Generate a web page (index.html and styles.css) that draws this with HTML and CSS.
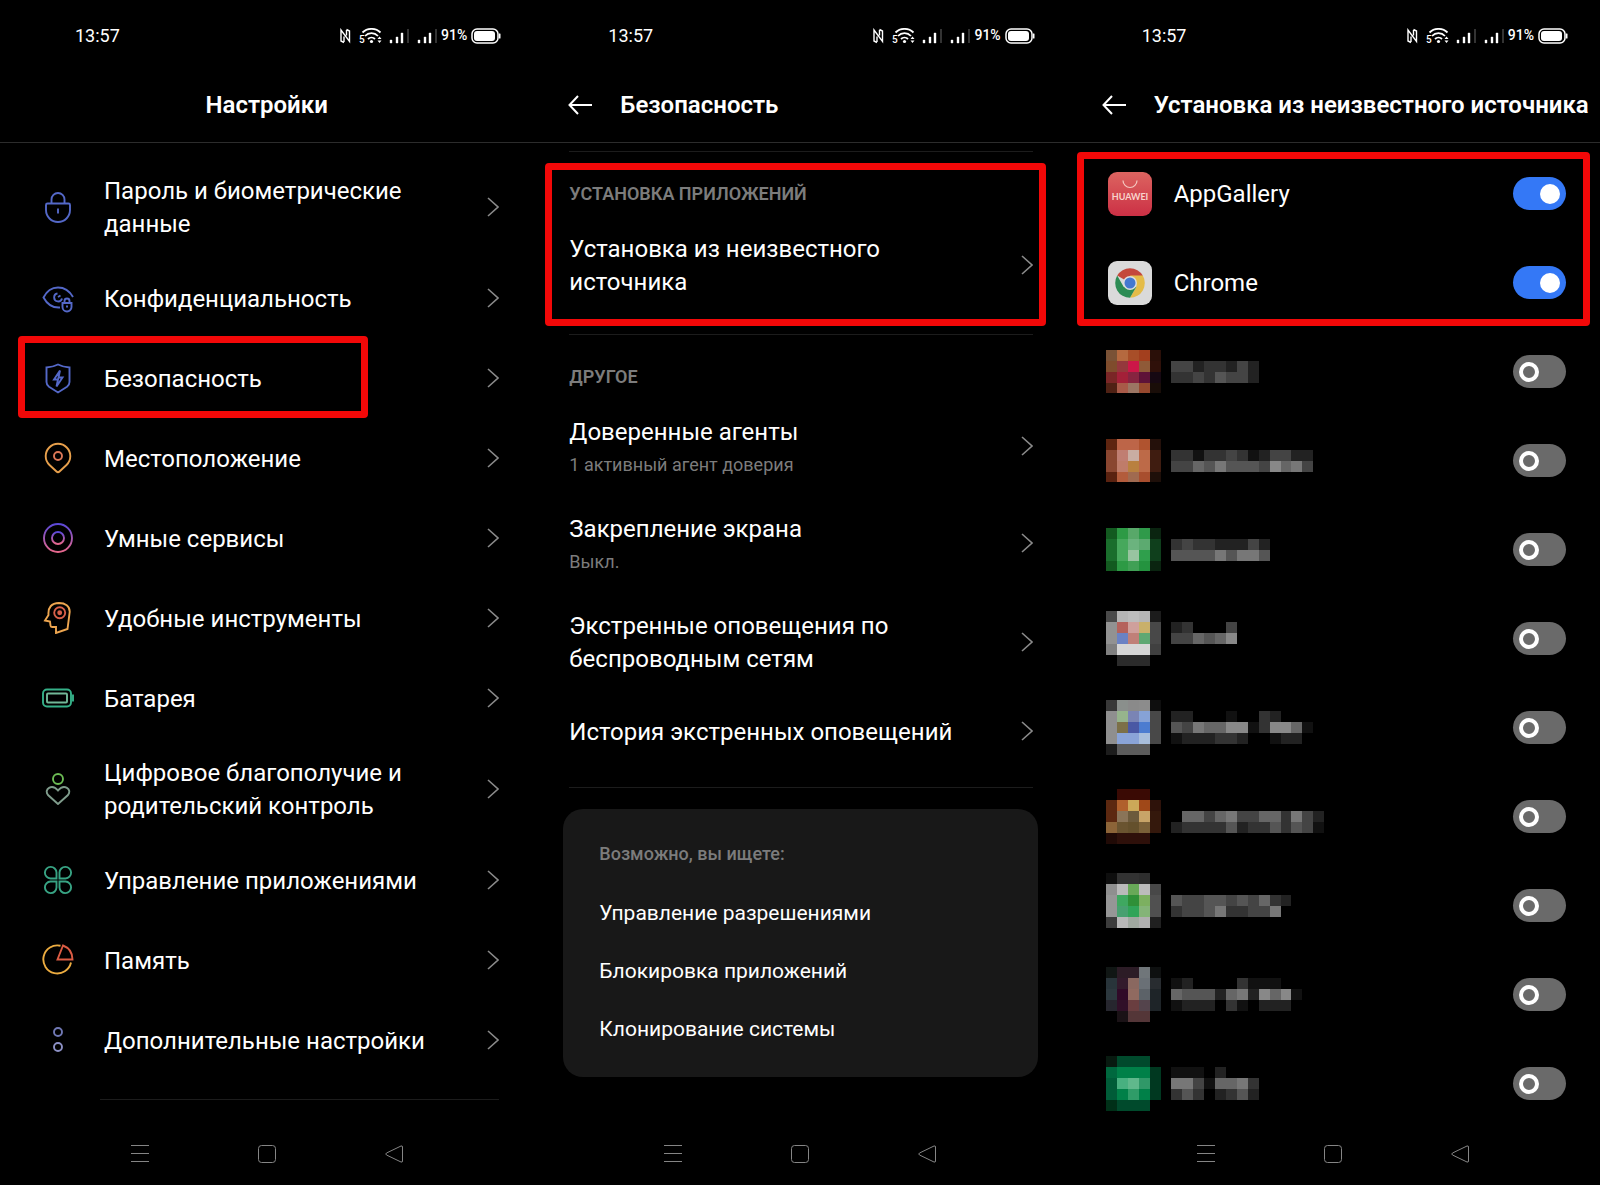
FILE: index.html
```html
<!DOCTYPE html>
<html lang="ru">
<head>
  <meta charset="UTF-8">
  <meta name="viewport" content="width=device-width, initial-scale=1.0">
  <title>Настройки</title>
  <link rel="stylesheet" href="styles.css">
</head>
<body>

  <!-- Общие иконки -->
  <svg class="sprite" width="0" height="0" aria-hidden="true">
    <defs>
      <linearGradient id="ring-grad" x1="0" y1="0" x2="0" y2="1">
        <stop offset="0" stop-color="#5a48d8"/>
        <stop offset="1" stop-color="#e8688c"/>
      </linearGradient>
      <linearGradient id="huawei-grad" x1="0" y1="0" x2="0" y2="1">
        <stop offset="0" stop-color="#dc6460"/>
        <stop offset="1" stop-color="#cc3045"/>
      </linearGradient>
    </defs>
    <symbol id="signals" viewBox="0 0 98 16">
      <path d="M5 14.500L2 13V2L10.500 13.500V3L7.500 1.500M5 8.500V14M7.500 2V7.500" fill="none" stroke="#fff" stroke-width="1.400"/>
      <g fill="none" stroke="#fff" stroke-width="1.800">
        <path d="M23.500 4.500a13 13 0 0 1 18 0M26 8a9 9 0 0 1 13 0M29 11a5 5 0 0 1 7 0"/>
      </g>
      <circle cx="32.500" cy="13.500" r="1.600" fill="#fff"/>
      <path d="M38.500 11l2-2.500 2 2.500zM38.500 12.500l2 2.500 2-2.500z" fill="#fff"/>
      <path d="M51 12h2v3h-2zM57 9h2v6h-2zM62 5h2v10h-2zM79 12h2v3h-2zM85 9h2v6h-2zM90 5h2v10h-2z" fill="#fff" stroke="#fff" stroke-width=".4"/>
      <path d="M68 1h2v14h-2zM96 1h2v14h-2z" fill="#333"/>
    </symbol>
    <symbol id="power" viewBox="0 0 30 16">
      <rect x="1" y="1" width="26" height="14" rx="5" fill="none" stroke="#fff" stroke-width="1.500"/>
      <rect x="3" y="3" width="21" height="10" rx="3" fill="#fff"/>
      <path d="M28 5.500h1q.5 0 .5.500v4q0 .5-.5.500h-1z" fill="#fff"/>
    </symbol>
    <symbol id="chevron" viewBox="0 0 12 20">
      <path d="M1 1l10 9-10 9" fill="none" stroke="#8a8a8a" stroke-width="1.600"/>
    </symbol>
    <symbol id="arrow" viewBox="0 0 24 20">
      <path d="M24 10H1.500M10 1L1.500 10l8.500 9" fill="none" stroke="#fff" stroke-width="2"/>
    </symbol>
    <symbol id="nav-menu" viewBox="0 0 18 18">
      <path d="M0 .5h18M0 8.500h18M0 16.500h18" stroke="#858585"/>
    </symbol>
    <symbol id="nav-home" viewBox="0 0 18 18">
      <rect x=".5" y=".5" width="17" height="17" rx="3" fill="none" stroke="#858585"/>
    </symbol>
    <symbol id="nav-back" viewBox="0 0 18 18">
      <path d="M16 1Q17.500.500 17.500 2v14q0 1.500-1.500 1L1.500 10Q0 9 1.500 8z" fill="none" stroke="#858585"/>
    </symbol>
  </svg>

  <main class="screens">

    <!-- Настройки -->
    <section class="screen">
      <header class="header">
        <div class="status">
          <time>13:57</time>
          <div class="status-icons">
            <svg width="98" height="16"><use href="#signals"/><text x="20" y="15">5</text></svg>
            <span>91%</span>
            <svg width="30" height="16"><use href="#power"/></svg>
          </div>
        </div>
        <div class="titlebar centered"><h1>Настройки</h1></div>
      </header>

      <nav class="content settings">
        <a class="row" href="#password">
          <svg class="icon blue" viewBox="0 0 32 32"><path d="M5.500 12.500h21q1.500 0 1.500 1.500v5a12 12 0 0 1-24 0v-5q0-1.500 1.500-1.500zM9.500 12.500V8.500a6.500 6.500 0 0 1 13 0v4M16 17.500v5"/></svg>
          <span class="name">Пароль и биометрические данные</span>
          <svg class="chevron"><use href="#chevron"/></svg>
        </a>
        <a class="row" href="#privacy">
          <svg class="icon blue" viewBox="0 0 32 32"><path d="M31 15C27.500 9 22 5.500 16 5.500C9.500 5.500 4.500 9.500 1.500 15.500C5 22 11 26 18 25.500M15.500 11.500a4 4 0 1 0 4.500 5M18.500 13.500l-2.500 1.500"/><path d="M20.500 21h9v4a4.500 4.500 0 0 1-9 0zM22.500 21v-2a2.500 2.500 0 0 1 5 0v2M25 23.500v2"/></svg>
          <span class="name">Конфиденциальность</span>
          <svg class="chevron"><use href="#chevron"/></svg>
        </a>
        <a class="row marked" href="#security">
          <svg class="icon blue" viewBox="0 0 32 32"><path d="M16 2.500Q21 5 27.500 5.500V20q0 3-2.500 4.800L16 30.500L7 24.800Q4.500 23 4.500 20V5.500Q11 5 16 2.500zM18 8.500L12 17.500H16L14.500 24.500L20.500 15.500H16.500z"/></svg>
          <span class="name">Безопасность</span>
          <svg class="chevron"><use href="#chevron"/></svg>
        </a>
        <a class="row" href="#location">
          <svg class="icon" stroke="#e8a04c" viewBox="0 0 32 32"><path d="M14.500 29.500L7.500 23A12.300 12.300 0 1 1 24.500 23L17.500 29.500Q16 31 14.500 29.500z"/><circle cx="16" cy="14" r="4" stroke="#dc7858"/></svg>
          <span class="name">Местоположение</span>
          <svg class="chevron"><use href="#chevron"/></svg>
        </a>
        <a class="row" href="#smart">
          <svg class="icon" stroke="url(#ring-grad)" viewBox="0 0 32 32"><circle cx="16" cy="16" r="14"/><circle cx="16" cy="16" r="6"/></svg>
          <span class="name">Умные сервисы</span>
          <svg class="chevron"><use href="#chevron"/></svg>
        </a>
        <a class="row" href="#tools">
          <svg class="icon" stroke="#eea650" viewBox="0 0 32 32"><path d="M17 1C23 1 28 4 27.700 10L25.500 27L14 31V25H10Q8.500 25 8.500 23.500L8 19.500L3 18.500L6.500 13Q5.500 1.500 17 1z"/><circle cx="17.700" cy="10.700" r="5.500" stroke="#d8604a"/><circle cx="17.700" cy="10.700" r="1.500" stroke="#d8604a" fill="#d8604a"/></svg>
          <span class="name">Удобные инструменты</span>
          <svg class="chevron"><use href="#chevron"/></svg>
        </a>
        <a class="row" href="#battery">
          <svg class="icon" stroke="#35b088" viewBox="0 0 32 32"><rect x="1" y="7.500" width="28" height="17" rx="4"/><rect x="5" y="11.500" width="20" height="9" rx="1" stroke="#72b898"/><path d="M31 12.500v7"/></svg>
          <span class="name">Батарея</span>
          <svg class="chevron"><use href="#chevron"/></svg>
        </a>
        <a class="row" href="#wellbeing">
          <svg class="icon" stroke="#7f9c8c" viewBox="0 0 32 32"><circle cx="16" cy="6" r="5" stroke="#6cbc54"/><path d="M16 31L6 22C1.500 16 10 10.500 16 17.500C22 10.500 30.500 16 26 22z"/></svg>
          <span class="name">Цифровое благополучие и родительский контроль</span>
          <svg class="chevron"><use href="#chevron"/></svg>
        </a>
        <a class="row" href="#apps">
          <svg class="icon" stroke="#38a484" viewBox="0 0 32 32"><path d="M14.500 14.500H8.500A5.800 5.800 0 1 1 14.500 8.500zM17.500 14.500V8.500A5.800 5.800 0 1 1 23.500 14.500zM14.500 17.500V23.500A5.800 5.800 0 1 1 8.500 17.500zM17.500 17.500H23.500A5.800 5.800 0 1 1 17.500 23.500z"/></svg>
          <span class="name">Управление приложениями</span>
          <svg class="chevron"><use href="#chevron"/></svg>
        </a>
        <a class="row" href="#storage">
          <svg class="icon" stroke="#ecac40" viewBox="0 0 32 32"><path d="M18.500 1.800A14 14 0 1 0 29 18.500"/><path d="M21 1.500L15.500 15.500H30.500C30.500 9 27.500 4 21 1.500z" stroke="#dc5c44"/></svg>
          <span class="name">Память</span>
          <svg class="chevron"><use href="#chevron"/></svg>
        </a>
        <a class="row" href="#more">
          <svg class="icon" stroke="#7078b4" viewBox="0 0 32 32"><circle cx="16" cy="8" r="4"/><circle cx="16" cy="23" r="4" stroke="#8c90c4"/></svg>
          <span class="name">Дополнительные настройки</span>
          <svg class="chevron"><use href="#chevron"/></svg>
        </a>
        <hr>
      </nav>

      <footer class="navbar">
        <button type="button" aria-label="Меню"><svg><use href="#nav-menu"/></svg></button>
        <button type="button" aria-label="Домой"><svg><use href="#nav-home"/></svg></button>
        <button type="button" aria-label="Назад"><svg><use href="#nav-back"/></svg></button>
      </footer>
    </section>

    <!-- Безопасность -->
    <section class="screen">
      <header class="header">
        <div class="status">
          <time>13:57</time>
          <div class="status-icons">
            <svg width="98" height="16"><use href="#signals"/><text x="20" y="15">5</text></svg>
            <span>91%</span>
            <svg width="30" height="16"><use href="#power"/></svg>
          </div>
        </div>
        <div class="titlebar">
          <button class="back" type="button" aria-label="Назад"><svg><use href="#arrow"/></svg></button>
          <h1>Безопасность</h1>
        </div>
      </header>

      <div class="content security">
        <section class="group marked">
          <h2>УСТАНОВКА ПРИЛОЖЕНИЙ</h2>
          <a class="row" href="#unknown">
            <span class="name">Установка из неизвестного источника</span>
            <svg class="chevron"><use href="#chevron"/></svg>
          </a>
        </section>
        <section class="group">
          <h2>ДРУГОЕ</h2>
          <a class="row" href="#agents">
            <span class="name">Доверенные агенты<small>1 активный агент доверия</small></span>
            <svg class="chevron"><use href="#chevron"/></svg>
          </a>
          <a class="row" href="#pin">
            <span class="name">Закрепление экрана<small>Выкл.</small></span>
            <svg class="chevron"><use href="#chevron"/></svg>
          </a>
          <a class="row" href="#alerts">
            <span class="name">Экстренные оповещения по беспроводным сетям</span>
            <svg class="chevron"><use href="#chevron"/></svg>
          </a>
          <a class="row" href="#history">
            <span class="name">История экстренных оповещений</span>
            <svg class="chevron"><use href="#chevron"/></svg>
          </a>
        </section>
        <hr>
        <aside class="card">
          <h3>Возможно, вы ищете:</h3>
          <a href="#permissions">Управление разрешениями</a>
          <a href="#lock">Блокировка приложений</a>
          <a href="#clone">Клонирование системы</a>
        </aside>
      </div>

      <footer class="navbar">
        <button type="button" aria-label="Меню"><svg><use href="#nav-menu"/></svg></button>
        <button type="button" aria-label="Домой"><svg><use href="#nav-home"/></svg></button>
        <button type="button" aria-label="Назад"><svg><use href="#nav-back"/></svg></button>
      </footer>
    </section>

    <!-- Установка из неизвестного источника -->
    <section class="screen">
      <header class="header">
        <div class="status">
          <time>13:57</time>
          <div class="status-icons">
            <svg width="98" height="16"><use href="#signals"/><text x="20" y="15">5</text></svg>
            <span>91%</span>
            <svg width="30" height="16"><use href="#power"/></svg>
          </div>
        </div>
        <div class="titlebar">
          <button class="back" type="button" aria-label="Назад"><svg><use href="#arrow"/></svg></button>
          <h1>Установка из неизвестного источника</h1>
        </div>
      </header>

      <div class="content sources">
        <div class="allowed marked">
          <label class="app">
            <svg class="logo" viewBox="0 0 44 44">
              <rect width="44" height="44" rx="9" fill="url(#huawei-grad)"/>
              <path d="M15 8.500a7 7 0 0 0 14 0" fill="none" stroke="#f4c8c0" stroke-width="1.200"/>
              <text x="22" y="28" text-anchor="middle" font-family="Lato, sans-serif" font-size="9" font-weight="700" fill="#f8d4cc">HUAWEI</text>
            </svg>
            <span>AppGallery</span>
            <input type="checkbox" role="switch" checked>
          </label>
          <label class="app">
            <svg class="logo" viewBox="0 0 44 44">
              <rect width="44" height="44" rx="9" fill="#dadada"/>
              <path d="M22 22L9.200 14.600A14.800 14.800 0 0 1 34.800 14.600z" fill="#c4483c"/>
              <path d="M22 14.600H34.800A14.800 14.800 0 0 1 22 36.800L28.400 25.700z" fill="#e4bc48"/>
              <path d="M9.200 14.600A14.800 14.800 0 0 0 22 36.800L28.400 25.700L15.600 25.700z" fill="#2c8c54"/>
              <circle cx="22" cy="22" r="7" fill="#dedede"/>
              <circle cx="22" cy="22" r="5.500" fill="#4478d0"/>
            </svg>
            <span>Chrome</span>
            <input type="checkbox" role="switch" checked>
          </label>
        </div>
        <div id="masked-apps"></div>
      </div>

      <footer class="navbar">
        <button type="button" aria-label="Меню"><svg><use href="#nav-menu"/></svg></button>
        <button type="button" aria-label="Домой"><svg><use href="#nav-home"/></svg></button>
        <button type="button" aria-label="Назад"><svg><use href="#nav-back"/></svg></button>
      </footer>
    </section>

  </main>

  <script src="script.js"></script>
</body>
</html>
```
FILE: styles.css
```css
*, *::before, *::after { margin: 0; padding: 0; box-sizing: border-box; }

body {
  font-family: Roboto, sans-serif;
  font-size: 24px;
  line-height: 33px;
  background: #000;
  color: #fff;
}

a {
  color: inherit;
  text-decoration: none;
}

button {
  display: flex;
  background: none;
  border: none;
  cursor: pointer;
}

hr {
  border: none;
  border-top: 1px solid #1c1c1c;
}

.sprite {
  position: absolute;
}

.screens {
  display: grid;
  grid-template-columns: repeat(3, minmax(0, 1fr));
  min-height: 100vh;
}

.screen {
  display: flex;
  flex-direction: column;
}

/* Шапка */
.header {
  border-bottom: 1px solid #2c2c2c;
}

.status {
  display: flex;
  justify-content: space-between;
  align-items: center;
  height: 68px;
  padding: 3px 32px 0 75px;
  font-size: 18px;
}

.status-icons {
  display: flex;
  align-items: center;
  gap: 4px;
  font-size: 14px;
  font-weight: 500;
}

.status-icons text {
  font-size: 10px;
  fill: #fff;
}

.titlebar {
  display: flex;
  align-items: center;
  gap: 28px;
  height: 74px;
  padding-left: 35px;
}

.titlebar.centered {
  justify-content: center;
  padding-left: 0;
}

.titlebar h1 {
  font-size: 24px;
  font-weight: 600;
  white-space: nowrap;
}

.back svg {
  width: 24px;
  height: 20px;
}

/* Списки */
.content {
  flex: 1;
}

.row {
  display: flex;
  align-items: center;
  min-height: 80px;
  padding: 17px 0;
}

.name {
  flex: 1;
  padding-top: 2px;
}

.name small {
  display: block;
  margin-top: 4px;
  font-size: 18px;
  line-height: 24px;
  color: #7c7c7c;
}

.chevron {
  flex: none;
  width: 12px;
  height: 20px;
}

.settings {
  padding: 13px 34px 0 42px;
}

.settings .row {
  gap: 30px;
}

.settings hr {
  margin: 19px 0 0 58px;
}

.icon {
  flex: none;
  width: 32px;
  height: 32px;
  fill: none;
  stroke-width: 1.9;
}

.icon.blue {
  stroke: #5468c8;
}

/* Красная рамка поверх пункта */
.marked {
  position: relative;
}

.marked::after {
  content: "";
  position: absolute;
  border: 7px solid #f20808;
  border-radius: 4px;
  pointer-events: none;
}

.row.marked::after {
  inset: -2px 131px 0 -24px;
}

.group.marked::after {
  inset: 11px -13px 8px -24px;
}

.allowed.marked::after {
  inset: 3px 10px 1px;
}

.security {
  padding: 8px 34px 0 36px;
}

.group {
  padding: 30px 0 18px;
  border-top: 1px solid #1c1c1c;
}

.group .row {
  min-height: 76px;
}

.group .name {
  padding-right: 60px;
}

.group h2 {
  margin-bottom: 8px;
  font-size: 18px;
  font-weight: 600;
  line-height: 24px;
  color: #7c7c7c;
}

.card {
  margin: 21px -5px 0 -6px;
  padding: 33px 36px 19px;
  border-radius: 20px;
  background: #181818;
  font-size: 21px;
}

.card h3 {
  margin-bottom: 18px;
  font-size: 18px;
  font-weight: 500;
  line-height: 24px;
  color: #7c7c7c;
}

.card a {
  display: block;
  line-height: 58px;
}

/* Приложения */
.sources {
  padding-top: 6px;
}

.app {
  display: flex;
  align-items: center;
  gap: 22px;
  height: 89px;
  padding: 0 34px 0 41px;
}

.app span {
  padding-top: 2px;
}

.app.masked {
  padding-left: 39px;
}

.logo {
  width: 44px;
  height: 44px;
}

.mosaic {
  width: 240px;
}

.app input {
  appearance: none;
  display: flex;
  align-items: center;
  width: 53px;
  height: 33px;
  margin-left: auto;
  padding: 0 6px;
  border-radius: 17px;
  background: #6a6a6a;
}

.app input::before {
  content: "";
  width: 20px;
  height: 20px;
  border: 4px solid #fff;
  border-radius: 50%;
}

.app input:checked {
  justify-content: flex-end;
  background: #3478f6;
}

.app input:checked::before {
  background: #fff;
}

/* Нижняя панель */
.navbar {
  display: flex;
  justify-content: center;
  align-items: center;
  gap: 109px;
  height: 56px;
  padding-bottom: 6px;
}

.navbar svg {
  width: 18px;
  height: 18px;
}
```
FILE: script.js
```javascript
// Скрытые приложения: icon - цвета клеток, name - оттенки серого (hex-цифра на клетку),
// top - с какой строки начинается название, rows - высота мозаики в клетках
const apps = [
  { rows: 4, top: 1, icon: [
    '7a5236 b5693f a84e28 a33f1e 2a0f08',
    '7f4c2c 94383c cc1748 8f5a38 2f1009',
    '7a2626 a32038 862440 5e1238 160812',
    '4f2114 a85a48 9b7563 96482e 190d08'],
    name: ['44233242', '33435442'] },
  { rows: 4, top: 1, icon: [
    '5f2510 bd6548 bd6548 b0532f 24100a',
    '8a4630 c07e72 c9ada2 bd6a48 3f1c10',
    '8a4630 bf7c6a b9803f bd6a48 3f1c10',
    '5a2210 b35c3c a06a50 a84e2e 1e0f09'],
    name: ['3313343124422', '4465755548674'] },
  { rows: 4, top: 1, icon: [
    '135a20 2d9a45 58a869 2f9a4a 0a2410',
    '1a6e2c 46a85c 6bb37e 5caa70 0f3f1c',
    '1a6e2c 46a85c 98c4a0 2f9f4c 0f3f1c',
    '135a20 2d9a45 40a055 24933f 0a2410'],
    name: ['343322242', '555575775'] },
  { rows: 5, top: 1, icon: [
    '4a4a4a b5b5b5 bcbcbc b5b5b5 1c1c1c',
    '929292 b5625c cfa09c c9b06a 484848',
    '929292 6b82c4 c08078 5fa873 484848',
    '808080 d6d6d6 d6d6d6 d6d6d6 404040',
    '000000 2b2b2b 2b2b2b 2b2b2b 000000'],
    name: ['230004', '446568'] },
  { rows: 5, top: 1, icon: [
    '383838 8a8f8c 8a8a8a 8c8c8c 0e0e0e',
    '8f8f8f 96b48c 7a84b4 86a2d6 484848',
    '8f8f8f 7c7048 4a58a4 4c7cd0 484848',
    '8f8f8f 8aa4d8 8aa4d8 a8bedc 484848',
    '1c1c1c 5c5c5c 5c5c5c 5c5c5c 000000'],
    name: ['2200010032000', '5476688138861', '1222332001220'] },
  { rows: 5, top: 2, icon: [
    '000000 3a0a04 3a0a04 3a0a04 000000',
    '5c2810 b0602c cca858 a04818 2e120a',
    '5c2810 8a7458 6c5a3c c8a468 34180c',
    '8c6438 6a5430 64502c 7a6038 34180c',
    '200a06 2e100a 2e100a 2e100a 000000'],
    name: ['06646744663742', '23333523353541'] },
  { rows: 6, top: 2, icon: [
    '0e0e0e 323232 323232 2e2e2e 000000',
    '8f8f8f bababa 68a858 bcbcbc 484848',
    '969696 3fa860 2f9038 7cb060 505050',
    '969696 48a070 30a458 84b478 505050',
    '3c3c3c b8b8b8 a0a8a0 b0b0b0 202020'],
    name: ['54455454632', '34457334470'] },
  { rows: 5, top: 1, icon: [
    '101614 2c1c26 2c1c26 70767a 0e1010',
    '28343a 321a2c 8a6860 6a7076 282c30',
    '2c383e 300a28 906a60 5c6268 1e2428',
    '26262e 301028 6a3e40 54444c 1e2428',
    '000000 1a1216 543638 543638 000000'],
    name: ['120000311100', '655526728681', '122203102220'] },
  { rows: 5, top: 1, icon: [
    '081a10 004a2c 004a2c 004a2c 000000',
    '00683e 008048 008048 008048 003820',
    '005c38 48b080 60b88c 309868 003820',
    '005c38 008048 2f9c68 008048 003820',
    '003018 004a2c 004a2c 004a2c 000000'],
    name: ['11102000', '77416673', '35302352'] }
];

const cell = (x, y, color) => `<rect x="${x}" y="${y}" width="1" height="1" fill="#${color}"/>`;

document.getElementById('masked-apps').innerHTML = apps.map((app, i) => {
  const icon = app.icon.map((line, y) => line.split(' ').map((c, x) => cell(x, y, c)).join('')).join('');
  const name = app.name.map((line, y) => [...line].map((c, x) => cell(x + 6, y + app.top, c + c + c)).join('')).join('');
  return `<label class="app masked">
    <svg class="mosaic" viewBox="0 0 22 ${app.rows}" shape-rendering="crispEdges">${icon}${name}</svg>
    <input type="checkbox" role="switch" aria-label="Приложение ${i + 3}">
  </label>`;
}).join('');
```
